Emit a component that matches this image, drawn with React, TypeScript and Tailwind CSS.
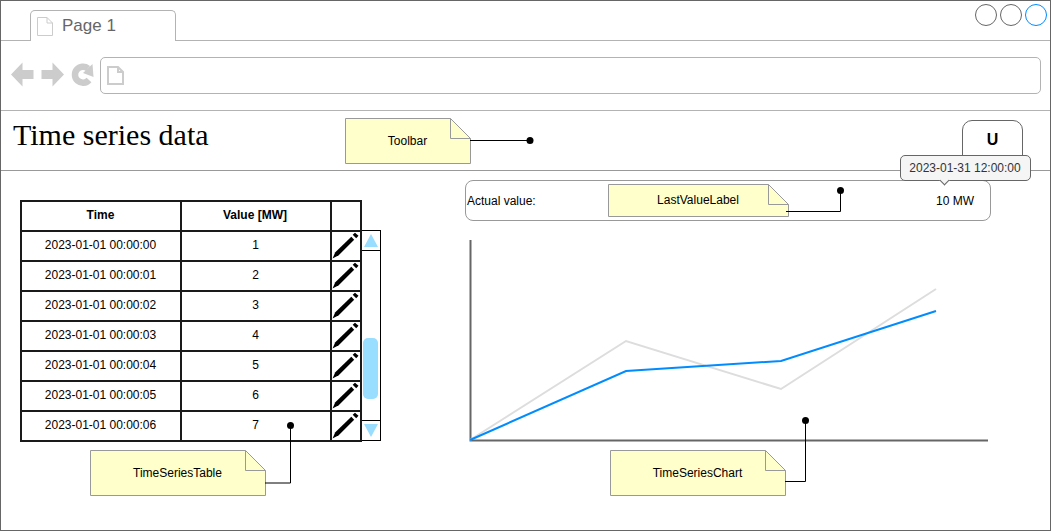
const rows = [
  ["2023-01-01 00:00:00", "1"],
  ["2023-01-01 00:00:01", "2"],
  ["2023-01-01 00:00:02", "3"],
  ["2023-01-01 00:00:03", "4"],
  ["2023-01-01 00:00:04", "5"],
  ["2023-01-01 00:00:05", "6"],
  ["2023-01-01 00:00:06", "7"],
];

function Pencil() {
  return (
    <svg width="28" height="28" viewBox="0 0 28 28" className="block">
      <path d="M0.5 26.5 L3.3 20.2 L19.3 4.7 L22.2 7.8 L6.7 23.3 Z" fill="#000" />
      <path d="M20.7 2.7 L23 0.7 L26.5 3.8 L24.2 6.3 Z" fill="#000" />
    </svg>
  );
}

function DocIcon({ w, h, stroke = 1 }: { w: number; h: number; stroke?: number }) {
  return (
    <svg width={w} height={h} viewBox={`0 0 ${w} ${h}`} className="block">
      <path
        d={`M${stroke / 2} ${stroke / 2} H${w - 6} L${w - stroke / 2} 6 V${h - stroke / 2} H${stroke / 2} Z M${w - 6} ${stroke / 2} V6 H${w - stroke / 2}`}
        fill="#fff"
        stroke="#cccccc"
        strokeWidth={stroke}
      />
    </svg>
  );
}

// draw.io style sticky note, the fold is always 20px
function Note({ label, className, w, h }: { label: string; className: string; w: number; h: number }) {
  return (
    <div className={`absolute flex items-center justify-center text-xs text-black ${className}`}>
      <svg width={w + 1} height={h + 1} className="absolute left-0 top-0">
        <path
          d={`M0.5 0.5 H${w - 19.5} L${w + 0.5} 20.5 V${h + 0.5} H0.5 Z`}
          fill="#ffffcc"
          stroke="#999999"
        />
        <path d={`M${w - 19.5} 0.5 V20.5 H${w + 0.5}`} fill="none" stroke="#999999" />
      </svg>
      <span className="relative">{label}</span>
    </div>
  );
}

function TimeTable() {
  return (
    <table className="table-fixed border-collapse w-[340px] text-xs text-black">
      <thead>
        <tr className="h-[30px]">
          <th className="w-[160px] border-2 border-[#1a1a1a] pb-[2px] pr-[1px] font-bold">Time</th>
          <th className="w-[150px] border-2 border-[#1a1a1a] pb-[2px] pr-[2px] font-bold">Value [MW]</th>
          <th className="w-[30px] border-2 border-[#1a1a1a]"></th>
        </tr>
      </thead>
      <tbody>
        {rows.map(([time, value]) => (
          <tr key={time} className="h-[30px]">
            <td className="border-2 border-[#1a1a1a] pb-[2px] pr-[1px] text-center">{time}</td>
            <td className="border-2 border-[#1a1a1a] pb-[2px] pr-[1px] text-center">{value}</td>
            <td className="border-2 border-[#1a1a1a] p-0">
              <Pencil />
            </td>
          </tr>
        ))}
      </tbody>
    </table>
  );
}

function Scrollbar() {
  return (
    <div className="mt-[30px] flex h-[211px] w-[19px] flex-col border-y border-r border-black">
      <div className="flex h-[20px] items-center justify-center border-b border-black">
        <svg width="14" height="13"><path d="M7 0 L14 13 H0 Z" fill="#99ddff" /></svg>
      </div>
      <div className="flex-1 pt-[87px] pl-[1px]">
        <div className="h-[61px] w-[15px] rounded-[5px] bg-[#99ddff]"></div>
      </div>
      <div className="flex h-[20px] items-center justify-center border-t border-black">
        <svg width="14" height="13"><path d="M0 0 H14 L7 13 Z" fill="#99ddff" /></svg>
      </div>
    </div>
  );
}

function Chart() {
  return (
    <svg width="526" height="210" viewBox="465 235 526 210" className="block">
      <path d="M470.5 240 V440.5 H988" fill="none" stroke="#666666" strokeWidth="2" />
      <path d="M470 440 L626 341 L781 389 L936 289" fill="none" stroke="#dddddd" strokeWidth="2" />
      <path d="M470 440 L626 371 L781 361 L936 311" fill="none" stroke="#008cff" strokeWidth="2" />
    </svg>
  );
}

export default function App() {
  return (
    <div
      className="relative h-[531px] w-[1051px] overflow-hidden border border-[#666666] bg-white text-xs text-black"
      style={{ fontFamily: '"Liberation Sans", Arial, sans-serif' }}
    >
      {/* Tab bar */}
      <div className="flex h-[40px] items-end justify-between border-b border-[#b3b3b3] pl-[29px] pr-[3px]">
        <div className="-mb-px flex h-[31px] w-[146px] items-start gap-[9px] rounded-t-[5px] border-x border-t border-[#b3b3b3] bg-white pl-[6px] pt-[6px]">
          <DocIcon w={16} h={19} />
          <span className="text-[17px] leading-[17px] text-[#666666]">Page 1</span>
        </div>
        <div className="mb-[14px] flex gap-[3px]">
          <span className="h-[22px] w-[22px] rounded-full border border-[#666666]"></span>
          <span className="h-[22px] w-[22px] rounded-full border border-[#666666]"></span>
          <span className="h-[22px] w-[22px] rounded-full border border-[#008cff]"></span>
        </div>
      </div>

      {/* Browser nav */}
      <div className="flex h-[70px] items-center border-b border-[#b3b3b3] pl-[9px] pr-[9px]">
        <svg width="90" height="26" viewBox="10 61 90 26" className="block shrink-0 -mt-[3px]">
          <path d="M11 74.5 L22.5 62.5 V70 H33.5 V79 H22.5 V86.5 Z" fill="#cccccc" />
          <path d="M64 74.5 L52.5 62.5 V70 H41.5 V79 H52.5 V86.5 Z" fill="#cccccc" />
          <path d="M88 68.5 A8 8 0 1 0 89 80" fill="none" stroke="#cccccc" strokeWidth="6.5" />
          <path d="M92.5 64 L93.5 77 L83 73 Z" fill="#cccccc" />
        </svg>
        <div className="flex h-[37px] flex-1 items-center rounded-[5px] border border-[#b3b3b3] pl-[6px]">
          <DocIcon w={17} h={19} stroke={2} />
        </div>
      </div>

      {/* Toolbar */}
      <div className="flex h-[60px] items-start justify-between border-b border-[#999999] pl-[12px] pr-[27px]">
        <h1
          className="mt-[7px] text-[30px] leading-[34px] text-black"
          style={{ fontFamily: '"Liberation Serif", "Times New Roman", serif' }}
        >
          Time series data
        </h1>
        <button className="mt-[9px] flex h-[46px] w-[61px] justify-center rounded-[10px] border border-[#666666] pt-[10px] text-base font-bold leading-[18px] text-black">
          U
        </button>
      </div>

      {/* Content */}
      <div className="flex items-start pl-[19px]">
        <div className="flex pt-[29px]">
          <TimeTable />
          <Scrollbar />
        </div>
        <div className="ml-[84px] flex flex-col pt-[9px]">
          <div className="flex h-[41px] w-[526px] items-center justify-between rounded-[8px] border border-[#999999] pl-[1px] pr-[16px]">
            <span>Actual value:</span>
            <span>10 MW</span>
          </div>
          <div className="mt-[14px]">
            <Chart />
          </div>
        </div>
      </div>

      {/* Tooltip over the toolbar line */}
      <div className="absolute left-[899px] top-[154px] flex h-[26px] w-[131px] items-center justify-center rounded-[5px] border border-[#666666] bg-[#f5f5f5] pr-[1px] text-xs text-[#333333]">
        2023-01-31 12:00:00
        <span className="absolute left-[40px] top-[21px] h-[7px] w-[7px] rotate-45 border-b border-r border-[#666666] bg-[#f5f5f5]"></span>
      </div>

      {/* Annotations */}
      <Note label="Toolbar" className="left-[344px] top-[117px] h-[45px] w-[125px]" w={125} h={45} />
      <Note label="LastValueLabel" className="left-[607px] top-[183px] h-[32px] w-[180px]" w={180} h={32} />
      <Note label="TimeSeriesTable" className="left-[89px] top-[449px] h-[45px] w-[175px]" w={175} h={45} />
      <Note label="TimeSeriesChart" className="left-[609px] top-[449px] h-[45px] w-[175px]" w={175} h={45} />

      <svg width="1051" height="531" viewBox="1 1 1051 531" className="pointer-events-none absolute left-0 top-0">
        <path d="M470 140.5 H530" stroke="#000" fill="none" />
        <circle cx="530" cy="140.5" r="3.5" />
        <path d="M786 211.5 H840.5 V190" stroke="#000" fill="none" />
        <circle cx="840.5" cy="190.5" r="3.5" />
        <path d="M265 483 H290.5 V425" stroke="#000" fill="none" />
        <circle cx="290.5" cy="425.5" r="3.5" />
        <path d="M785 481.5 H805.5 V421" stroke="#000" fill="none" />
        <circle cx="805.5" cy="420.5" r="3.5" />
      </svg>
    </div>
  );
}
